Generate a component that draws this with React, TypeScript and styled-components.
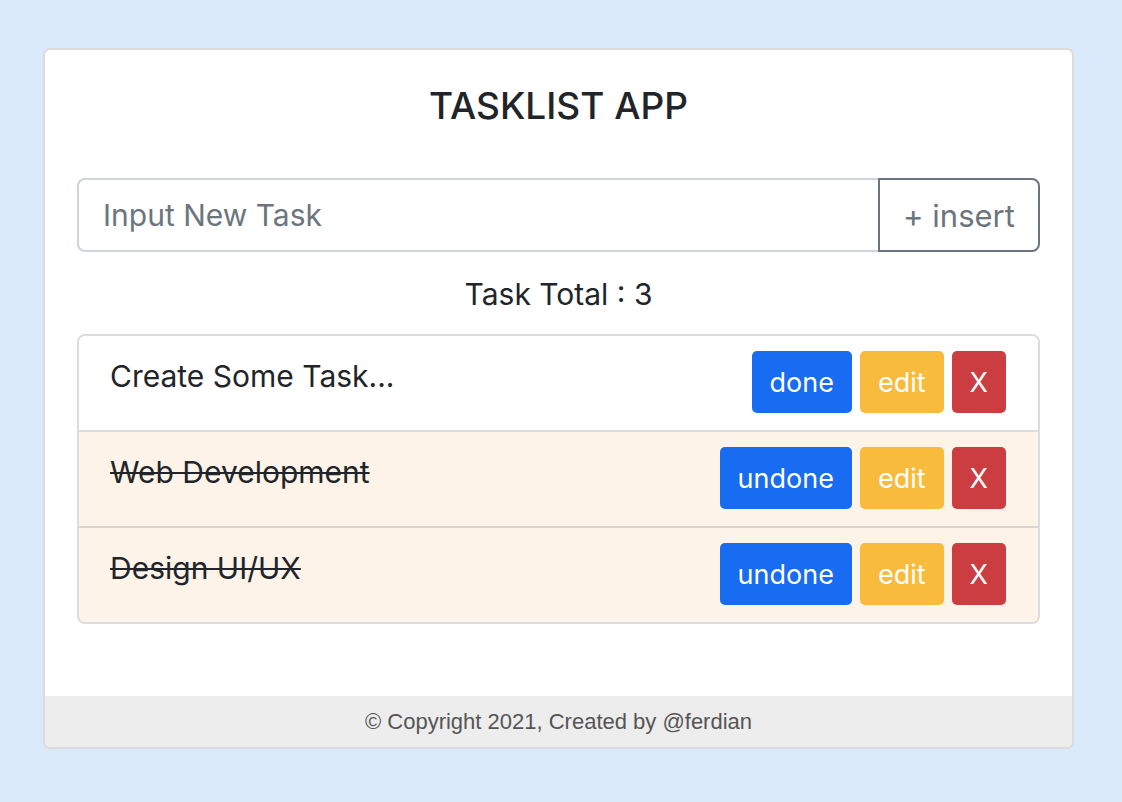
import React from "react";
import styled, { createGlobalStyle } from "styled-components";

const Global = createGlobalStyle`
  html, body { margin: 0; padding: 0; }
  body {
    background: #dbeafb;
    font-family: Inter, "Noto Sans", sans-serif;
    color: #212529;
  }
`;

const Page = styled.div`
  padding: 48px 48px 53px 43px;
`;

const Card = styled.div`
  background: #fff;
  border: 2px solid #dcdcdc;
  border-radius: 7px;
  overflow: hidden;
  display: flex;
  flex-direction: column;
`;

const Body = styled.div`
  padding: 33px 32px 72px 32px;
  display: flex;
  flex-direction: column;
`;

const Title = styled.h1`
  margin: 0;
  text-align: center;
  font-size: 37px;
  font-weight: 500;
  line-height: 46px;
  color: #212529;
`;

const InputGroup = styled.div`
  display: flex;
  margin-top: 49px;
  height: 74px;
`;

const TaskInput = styled.input`
  flex: 1;
  min-width: 0;
  border: 2px solid #ced4da;
  border-right: none;
  border-radius: 8px 0 0 8px;
  padding: 0 24px;
  font-family: inherit;
  font-size: 30px;
  color: #212529;
  outline: none;
  &::placeholder { color: #6c757d; }
`;

const InsertButton = styled.button`
  width: 162px;
  border: 2px solid #6c757d;
  border-radius: 0 8px 8px 0;
  background: #fff;
  color: #6c757d;
  font-family: inherit;
  font-size: 31px;
  cursor: pointer;
`;

const Total = styled.div`
  text-align: center;
  font-size: 30px;
  line-height: 40px;
  margin-top: 22px;
  margin-bottom: 20px;
`;

const List = styled.ul`
  list-style: none;
  margin: 0;
  padding: 0;
  border: 2px solid #dcdcdc;
  border-radius: 8px;
  overflow: hidden;
`;

const Row = styled.li<{ $done?: boolean }>`
  display: flex;
  align-items: flex-start;
  justify-content: space-between;
  height: 96px;
  box-sizing: border-box;
  padding: 15px 32px 0 31px;
  background: ${(p) => (p.$done ? "#fdf3e8" : "#fff")};
  border-bottom: 2px solid ${(p) => (p.$done ? "#dcd5cd" : "#dcdcdc")};
  &:last-child { border-bottom: none; height: 94px; }
`;

const TaskText = styled.span<{ $done?: boolean }>`
  font-size: 30px;
  line-height: 54px;
  margin-top: -2px;
  text-decoration: ${(p) => (p.$done ? "line-through" : "none")};
  text-decoration-thickness: 2px;
  color: #212529;
`;

const Actions = styled.div`
  display: flex;
  gap: 8px;
`;

const Btn = styled.button<{ $variant: "primary" | "warning" | "danger" }>`
  height: 62px;
  padding: 0 18px;
  border: none;
  border-radius: 5px;
  font-family: inherit;
  font-size: 27px;
  color: #fff;
  cursor: pointer;
  background: ${(p) =>
    p.$variant === "primary" ? "#176cf2" : p.$variant === "warning" ? "#f8bb3b" : "#cc3d42"};
`;

const Footer = styled.footer`
  background: #ededed;
  text-align: center;
  font-family: "Liberation Sans", Arial, sans-serif;
  font-size: 22px;
  color: #555;
  height: 51px;
  line-height: 51px;
`;

const tasks = [
  { text: "Create Some Task...", done: false },
  { text: "Web Development", done: true },
  { text: "Design UI/UX", done: true },
];

export default function App() {
  return (
    <Page>
      <Global />
      <Card>
        <Body>
          <Title>TASKLIST APP</Title>
          <InputGroup>
            <TaskInput placeholder="Input New Task" />
            <InsertButton>+ insert</InsertButton>
          </InputGroup>
          <Total>Task Total : {tasks.length}</Total>
          <List>
            {tasks.map((t) => (
              <Row key={t.text} $done={t.done}>
                <TaskText $done={t.done}>{t.text}</TaskText>
                <Actions>
                  <Btn $variant="primary">{t.done ? "undone" : "done"}</Btn>
                  <Btn $variant="warning">edit</Btn>
                  <Btn $variant="danger">X</Btn>
                </Actions>
              </Row>
            ))}
          </List>
        </Body>
        <Footer>© Copyright 2021, Created by @ferdian</Footer>
      </Card>
    </Page>
  );
}
